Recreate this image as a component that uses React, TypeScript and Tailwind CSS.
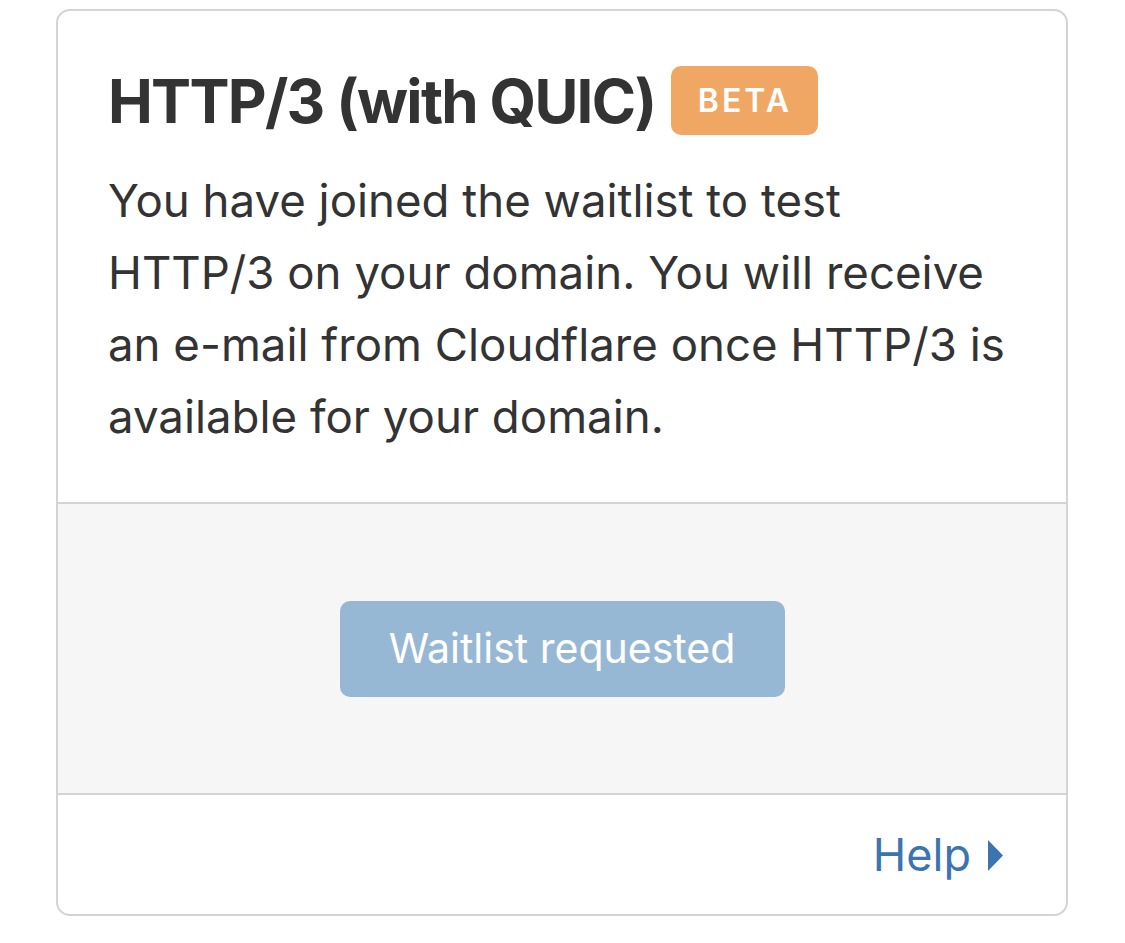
export default function App() {
  return (
    <div className="h-[943px] w-full bg-white pl-[56px] pt-[9px] font-['Inter','Liberation_Sans',sans-serif] text-[#333333]">
      <div className="w-[1012px] overflow-hidden rounded-[14px] border-2 border-[#d4d4d4] bg-white">
        <div className="h-[491px] pl-[50px] pt-[55px]">
          <div className="flex h-[69px] items-center gap-[16px]">
            <h2 className="text-[60px] font-bold leading-[72px] tracking-[-1.7px]">HTTP/3 (with QUIC)</h2>
            <span className="flex h-[69px] w-[147px] items-center justify-center rounded-[10px] bg-[#f0a763] text-[32px] font-semibold tracking-[3px] text-white">
              BETA
            </span>
          </div>
          <p className="mt-[30px] text-[45.6px] leading-[72px]">
            You have joined the waitlist to test
            <br />
            HTTP/3 on your domain. You will receive
            <br />
            an e-mail from Cloudflare once HTTP/3 is
            <br />
            available for your domain.
          </p>
        </div>
        <div className="flex h-[291px] items-center justify-center border-t-2 border-[#d4d4d4] bg-[#f6f6f6]">
          <button className="h-[96px] w-[445px] rounded-[10px] bg-[#97b8d5] text-[41px] text-white">
            Waitlist requested
          </button>
        </div>
        <div className="flex h-[121px] items-center justify-end border-t-2 border-[#d4d4d4] pr-[63px]">
          <a className="flex items-center gap-[17px] text-[45px] text-[#3c74b0]" href="#">
            Help
            <svg width="15" height="31" viewBox="0 0 15 31" className="mt-[2px]">
              <path d="M0 0 L15 15.5 L0 31 Z" fill="#3c74b0" />
            </svg>
          </a>
        </div>
      </div>
    </div>
  )
}
